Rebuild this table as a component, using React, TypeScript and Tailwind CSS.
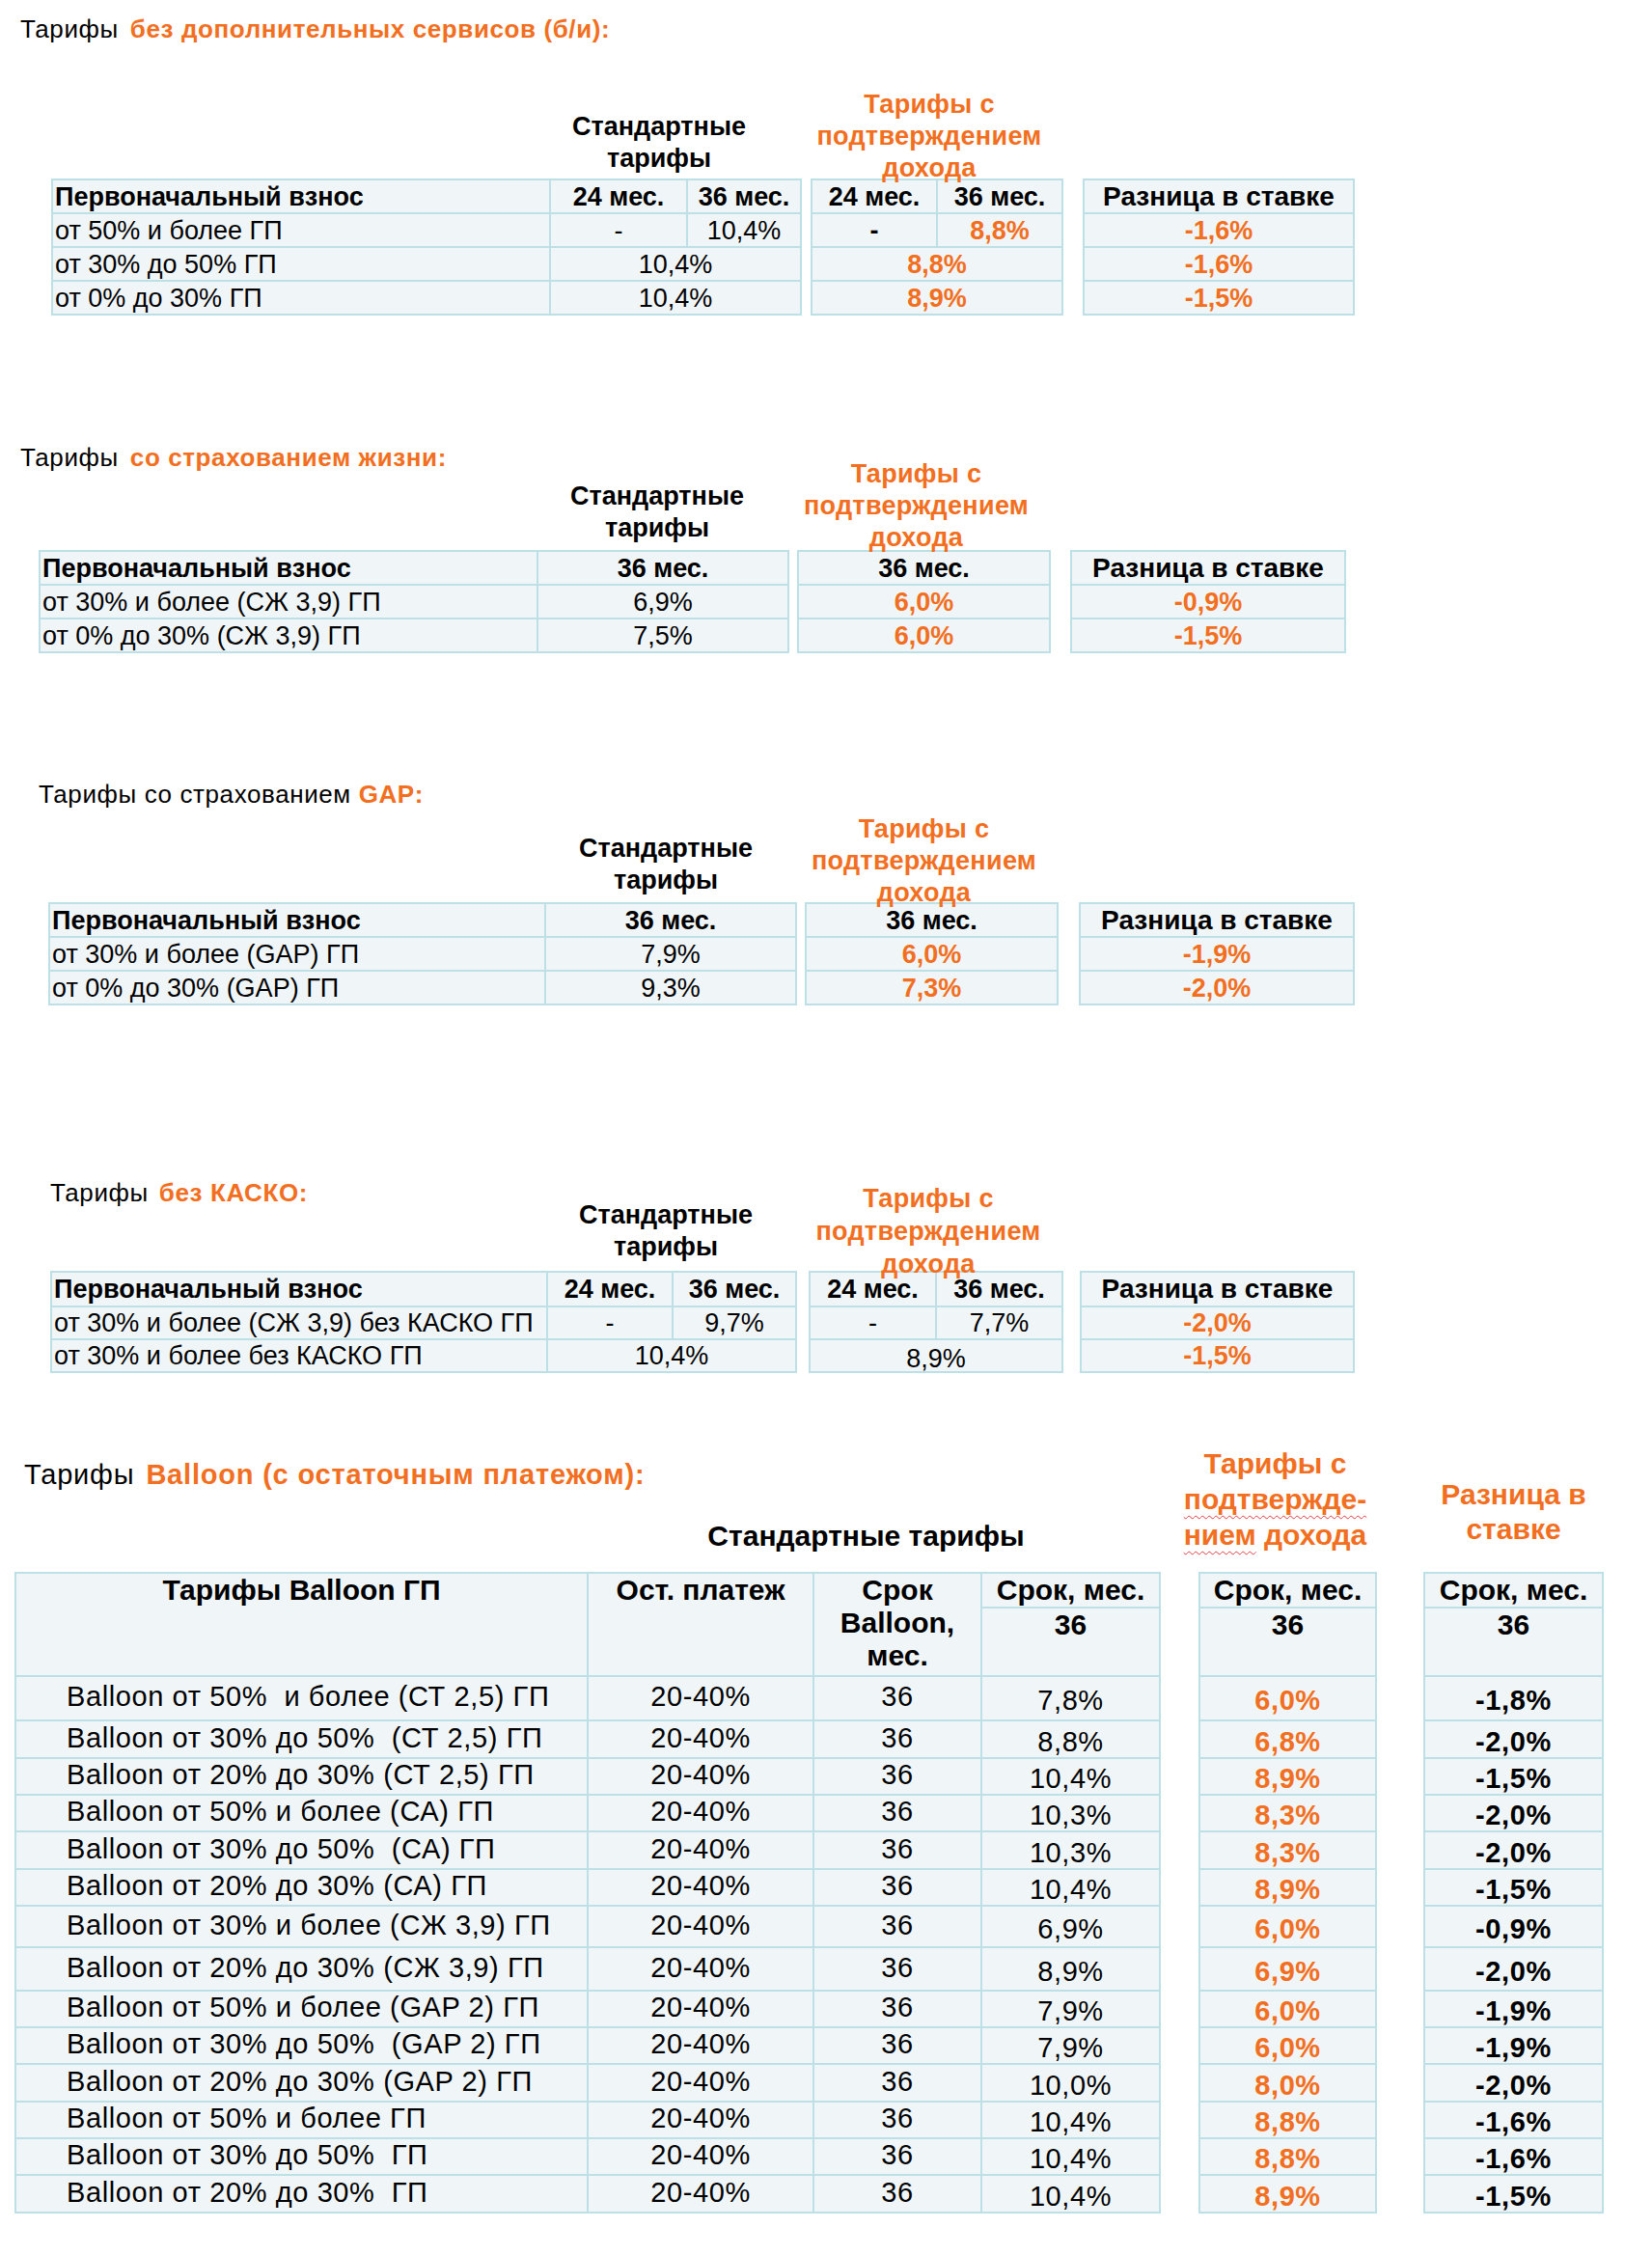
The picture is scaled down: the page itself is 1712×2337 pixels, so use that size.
import React from 'react';

type Kind = 'lh' | 'l' | 'h' | 'n' | 'o' | 'd';

interface Cell {
  t: string;
  k: Kind;
  span?: number;
  x?: string;
}

interface Row {
  h: string;
  cells: Cell[];
}

const ORANGE = 'text-[#f26f21]';
const CELL = 'border-2 border-[#bde0e7] bg-[#f0f6f8] p-0 whitespace-pre';

const kinds: Record<Kind, string> = {
  lh: 'text-left pl-[2px] font-bold',
  l: 'text-left pl-[2px]',
  h: 'text-center font-bold',
  n: 'text-center',
  o: 'text-center font-bold text-[#f26f21]',
  d: 'text-center font-bold text-[28px]',
};

const c = (t: string, k: Kind, span?: number, x?: string): Cell => ({ t, k, span, x });

const Table: React.FC<{ w: string; cols: string[]; rows: Row[] }> = ({ w, cols, rows }) => (
  <table className={`${w} table-fixed border-collapse`}>
    <colgroup>
      {cols.map((col, i) => (
        <col key={i} className={col} />
      ))}
    </colgroup>
    <tbody>
      {rows.map((r, i) => (
        <tr key={i} className={r.h}>
          {r.cells.map((cell, j) => (
            <td
              key={j}
              colSpan={cell.span}
              className={`${CELL} text-[27px] leading-[30px] ${kinds[cell.k]} ${cell.x ?? ''}`}
            >
              {cell.t}
            </td>
          ))}
        </tr>
      ))}
    </tbody>
  </table>
);

const StdHead: React.FC<{ cls: string }> = ({ cls }) => (
  <div className={`pl-[516px] text-center text-[27px] font-bold leading-[33px] ${cls}`}>
    Стандартные
    <br />
    тарифы
  </div>
);

const IncHead: React.FC<{ cls: string }> = ({ cls }) => (
  <div className={`relative z-10 pr-[16px] text-center text-[27px] font-bold tracking-[0.3px] ${ORANGE} ${cls}`}>
    Тарифы с
    <br />
    подтверждением
    <br />
    дохода
  </div>
);

const r35 = (cells: Cell[]): Row => ({ h: 'h-[35px]', cells });

const balloonRows = [
  { h: 'h-[46px]', l: 'Balloon от 50%  и более (СТ 2,5) ГП', s: '7,8%', i: '6,0%', d: '-1,8%' },
  { h: 'h-[39px]', l: 'Balloon от 30% до 50%  (СТ 2,5) ГП', s: '8,8%', i: '6,8%', d: '-2,0%' },
  { h: 'h-[38px]', l: 'Balloon от 20% до 30% (СТ 2,5) ГП', s: '10,4%', i: '8,9%', d: '-1,5%' },
  { h: 'h-[38px]', l: 'Balloon от 50% и более (СА) ГП', s: '10,3%', i: '8,3%', d: '-2,0%' },
  { h: 'h-[39px]', l: 'Balloon от 30% до 50%  (СА) ГП', s: '10,3%', i: '8,3%', d: '-2,0%' },
  { h: 'h-[38px]', l: 'Balloon от 20% до 30% (СА) ГП', s: '10,4%', i: '8,9%', d: '-1,5%' },
  { h: 'h-[43px]', l: 'Balloon от 30% и более (СЖ 3,9) ГП', s: '6,9%', i: '6,0%', d: '-0,9%' },
  { h: 'h-[45px]', l: 'Balloon от 20% до 30% (СЖ 3,9) ГП', s: '8,9%', i: '6,9%', d: '-2,0%' },
  { h: 'h-[38px]', l: 'Balloon от 50% и более (GAP 2) ГП', s: '7,9%', i: '6,0%', d: '-1,9%' },
  { h: 'h-[38px]', l: 'Balloon от 30% до 50%  (GAP 2) ГП', s: '7,9%', i: '6,0%', d: '-1,9%' },
  { h: 'h-[39px]', l: 'Balloon от 20% до 30% (GAP 2) ГП', s: '10,0%', i: '8,0%', d: '-2,0%' },
  { h: 'h-[38px]', l: 'Balloon от 50% и более ГП', s: '10,4%', i: '8,8%', d: '-1,6%' },
  { h: 'h-[38px]', l: 'Balloon от 30% до 50%  ГП', s: '10,4%', i: '8,8%', d: '-1,6%' },
  { h: 'h-[39px]', l: 'Balloon от 20% до 30%  ГП', s: '10,4%', i: '8,9%', d: '-1,5%' },
];

const BH = 'text-center font-bold text-[30px] leading-[34px] align-top';
const BV = 'text-center text-[29px] tracking-[0.6px] leading-[32px] pt-[4px]';
const BL = 'text-[29px] tracking-[0.6px] leading-[32px] pb-[4px]';

// side table of the balloon block: "Срок, мес." / "36" + one value per row
const BalloonSide: React.FC<{ w: string; vals: string[]; tone: string }> = ({ w, vals, tone }) => (
  <table className={`${w} table-fixed border-collapse`}>
    <tbody>
      <tr className="h-[34px]">
        <td className={`${CELL} ${BH}`}>Срок, мес.</td>
      </tr>
      <tr className="h-[71px]">
        <td className={`${CELL} ${BH}`}>36</td>
      </tr>
      {balloonRows.map((r, i) => (
        <tr key={i} className={r.h}>
          <td className={`${CELL} ${BV} ${tone}`}>{vals[i]}</td>
        </tr>
      ))}
    </tbody>
  </table>
);

const Title: React.FC<{ lead: string; accent: string; cls: string; gap?: string }> = ({ lead, accent, cls, gap }) => (
  <h2 className={`whitespace-nowrap ${cls}`}>
    {lead}
    <span className={`${gap ?? 'ml-[12px]'} font-bold ${ORANGE}`}>{accent}</span>
  </h2>
);

const T = 'text-[26px] leading-[33px] tracking-[0.6px]';

const App: React.FC = () => {
  return (
    <div className="min-h-[2337px] w-full bg-white pt-[14px] font-['Liberation_Sans',Arial,sans-serif] text-black">
      {/* без дополнительных сервисов */}
      <section className="flex items-end">
        <div className="ml-[53px] flex flex-col">
          <Title lead="Тарифы" accent="без дополнительных сервисов (б/и):" cls={`-ml-[32px] mb-[68px] ${T}`} />
          <StdHead cls="pr-[34px] mb-[4px]" />
          <Table
            w="w-[776px]"
            cols={['w-[516px]', 'w-[142px]', 'w-[118px]']}
            rows={[
              r35([c('Первоначальный взнос', 'lh'), c('24 мес.', 'h'), c('36 мес.', 'h')]),
              r35([c('от 50% и более ГП', 'l'), c('-', 'n'), c('10,4%', 'n')]),
              r35([c('от 30% до 50% ГП', 'l'), c('10,4%', 'n', 2)]),
              r35([c('от 0% до 30% ГП', 'l'), c('10,4%', 'n', 2)]),
            ]}
          />
        </div>
        <div className="ml-[9px] flex flex-col">
          <IncHead cls="leading-[33px] -mb-[6px]" />
          <Table
            w="w-[260px]"
            cols={['w-[130px]', 'w-[130px]']}
            rows={[
              r35([c('24 мес.', 'h'), c('36 мес.', 'h')]),
              r35([c('-', 'h'), c('8,8%', 'o')]),
              r35([c('8,8%', 'o', 2)]),
              r35([c('8,9%', 'o', 2)]),
            ]}
          />
        </div>
        <div className="ml-[20px]">
          <Table
            w="w-[280px]"
            cols={['w-[280px]']}
            rows={[
              r35([c('Разница в ставке', 'd')]),
              r35([c('-1,6%', 'o')]),
              r35([c('-1,6%', 'o')]),
              r35([c('-1,5%', 'o')]),
            ]}
          />
        </div>
      </section>

      {/* со страхованием жизни */}
      <section className="mt-[131px] flex items-end">
        <div className="ml-[40px] flex flex-col">
          <Title lead="Тарифы" accent="со страхованием жизни:" cls={`-ml-[19px] mb-[7px] ${T}`} />
          <StdHead cls="pr-[12px] mb-[6px]" />
          <Table
            w="w-[776px]"
            cols={['w-[516px]', 'w-[260px]']}
            rows={[
              r35([c('Первоначальный взнос', 'lh'), c('36 мес.', 'h')]),
              r35([c('от 30% и более (СЖ 3,9) ГП', 'l'), c('6,9%', 'n')]),
              r35([c('от 0% до 30% (СЖ 3,9) ГП', 'l'), c('7,5%', 'n')]),
            ]}
          />
        </div>
        <div className="ml-[8px] flex flex-col">
          <IncHead cls="leading-[33px] -mb-[4px]" />
          <Table
            w="w-[261px]"
            cols={['w-[261px]']}
            rows={[r35([c('36 мес.', 'h')]), r35([c('6,0%', 'o')]), r35([c('6,0%', 'o')])]}
          />
        </div>
        <div className="ml-[20px]">
          <Table
            w="w-[284px]"
            cols={['w-[284px]']}
            rows={[r35([c('Разница в ставке', 'd')]), r35([c('-0,9%', 'o')]), r35([c('-1,5%', 'o')])]}
          />
        </div>
      </section>

      {/* со страхованием GAP */}
      <section className="mt-[130px] flex items-end">
        <div className="ml-[50px] flex flex-col">
          <h2 className={`-ml-[10px] mb-[23px] whitespace-nowrap ${T}`}>
            Тарифы со страхованием <span className={`font-bold ${ORANGE}`}>GAP:</span>
          </h2>
          <StdHead cls="pr-[12px] mb-[6px]" />
          <Table
            w="w-[774px]"
            cols={['w-[514px]', 'w-[260px]']}
            rows={[
              r35([c('Первоначальный взнос', 'lh'), c('36 мес.', 'h')]),
              r35([c('от 30% и более (GAP) ГП', 'l'), c('7,9%', 'n')]),
              r35([c('от 0% до 30% (GAP) ГП', 'l'), c('9,3%', 'n')]),
            ]}
          />
        </div>
        <div className="ml-[8px] flex flex-col">
          <IncHead cls="leading-[33px] -mb-[7px]" />
          <Table
            w="w-[261px]"
            cols={['w-[261px]']}
            rows={[r35([c('36 мес.', 'h')]), r35([c('6,0%', 'o')]), r35([c('7,3%', 'o')])]}
          />
        </div>
        <div className="ml-[21px]">
          <Table
            w="w-[284px]"
            cols={['w-[284px]']}
            rows={[r35([c('Разница в ставке', 'd')]), r35([c('-1,9%', 'o')]), r35([c('-2,0%', 'o')])]}
          />
        </div>
      </section>

      {/* без КАСКО */}
      <section className="mt-[178px] flex items-end">
        <div className="ml-[52px] flex flex-col">
          <Title lead="Тарифы" accent="без КАСКО:" gap="ml-[11px]" cls={`mb-[-10px] ${T}`} />
          <div className="mb-[8px] pl-[514px] pr-[12px] text-center text-[27px] font-bold leading-[33px]">
            Стандартные
            <br />
            тарифы
          </div>
          <Table
            w="w-[772px]"
            cols={['w-[514px]', 'w-[130px]', 'w-[128px]']}
            rows={[
              { h: 'h-[36px]', cells: [c('Первоначальный взнос', 'lh'), c('24 мес.', 'h'), c('36 мес.', 'h')] },
              { h: 'h-[34px]', cells: [c('от 30% и более (СЖ 3,9) без КАСКО ГП', 'l'), c('-', 'n'), c('9,7%', 'n')] },
              { h: 'h-[34px]', cells: [c('от 30% и более без КАСКО ГП', 'l'), c('10,4%', 'n', 2)] },
            ]}
          />
        </div>
        <div className="ml-[12px] flex flex-col">
          <IncHead cls="leading-[34px] -mb-[10px]" />
          <Table
            w="w-[262px]"
            cols={['w-[131px]', 'w-[131px]']}
            rows={[
              { h: 'h-[36px]', cells: [c('24 мес.', 'h'), c('36 мес.', 'h')] },
              { h: 'h-[34px]', cells: [c('-', 'n'), c('7,7%', 'n')] },
              { h: 'h-[34px]', cells: [c('8,9%', 'n', 2, 'align-bottom !leading-[26px]')] },
            ]}
          />
        </div>
        <div className="ml-[17px]">
          <Table
            w="w-[283px]"
            cols={['w-[283px]']}
            rows={[
              { h: 'h-[36px]', cells: [c('Разница в ставке', 'd')] },
              { h: 'h-[34px]', cells: [c('-2,0%', 'o')] },
              { h: 'h-[34px]', cells: [c('-1,5%', 'o')] },
            ]}
          />
        </div>
      </section>

      {/* Balloon */}
      <section className="mt-[75px] flex items-end">
        <div className="ml-[15px] flex flex-col">
          <h2 className="ml-[10px] mb-[29px] whitespace-nowrap text-[29px] leading-[34px] tracking-[0.8px]">
            Тарифы<span className={`ml-[12px] font-bold ${ORANGE}`}>Balloon (с остаточным платежом):</span>
          </h2>
          <div className="mb-[19px] pl-[593px] pr-[16px] text-center text-[30px] font-bold leading-[36px]">
            Стандартные тарифы
          </div>
          <table className="w-[1186px] table-fixed border-collapse">
            <colgroup>
              <col className="w-[593px]" />
              <col className="w-[234px]" />
              <col className="w-[174px]" />
              <col className="w-[185px]" />
            </colgroup>
            <tbody>
              <tr className="h-[34px]">
                <td rowSpan={2} className={`${CELL} ${BH}`}>
                  Тарифы Balloon ГП
                </td>
                <td rowSpan={2} className={`${CELL} ${BH}`}>
                  Ост. платеж
                </td>
                <td rowSpan={2} className={`${CELL} text-center text-[30px] font-bold leading-[34px] align-top`}>
                  Срок
                  <br />
                  Balloon,
                  <br />
                  мес.
                </td>
                <td className={`${CELL} ${BH}`}>Срок, мес.</td>
              </tr>
              <tr className="h-[71px]">
                <td className={`${CELL} ${BH}`}>36</td>
              </tr>
              {balloonRows.map((r, i) => (
                <tr key={i} className={r.h}>
                  <td className={`${CELL} ${BL} pl-[52px] text-left`}>{r.l}</td>
                  <td className={`${CELL} ${BL} text-center`}>20-40%</td>
                  <td className={`${CELL} ${BL} text-center`}>36</td>
                  <td className={`${CELL} ${BV}`}>{r.s}</td>
                </tr>
              ))}
            </tbody>
          </table>
        </div>
        <div className="ml-[39px] flex w-[185px] flex-col">
          <div className={`-mx-[40px] mb-[20px] pr-[26px] text-center text-[30px] font-bold leading-[37px] ${ORANGE}`}>
            Тарифы с
            <br />
            <span className="underline decoration-wavy decoration-[#e0383e] decoration-1 underline-offset-[6px]">
              подтвержде-
            </span>
            <br />
            <span className="underline decoration-wavy decoration-[#e0383e] decoration-1 underline-offset-[6px]">
              нием
            </span>{' '}
            дохода
          </div>
          <BalloonSide w="w-[185px]" vals={balloonRows.map((r) => r.i)} tone="font-bold text-[#f26f21]" />
        </div>
        <div className="ml-[48px] flex w-[187px] flex-col">
          <div className={`-mx-[30px] mb-[26px] text-center text-[30px] font-bold leading-[36px] ${ORANGE}`}>
            Разница в
            <br />
            ставке
          </div>
          <BalloonSide w="w-[187px]" vals={balloonRows.map((r) => r.d)} tone="font-bold" />
        </div>
      </section>
    </div>
  );
};

export default App;
